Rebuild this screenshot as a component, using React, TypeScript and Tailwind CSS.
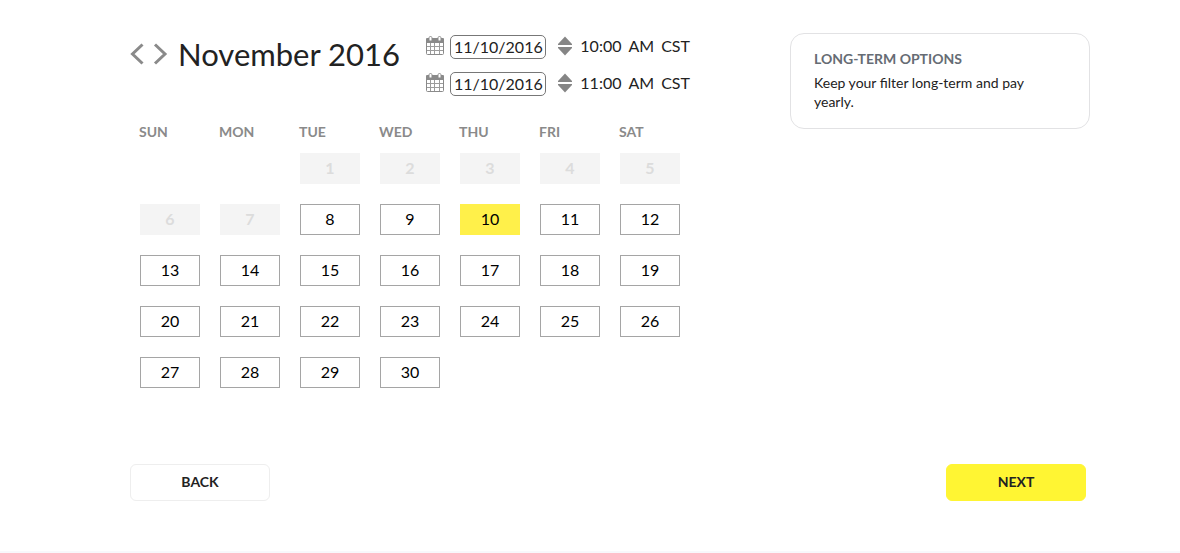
import { useState } from "react";

const WEEKDAYS = ["SUN", "MON", "TUE", "WED", "THU", "FRI", "SAT"];
const FIRST_WEEKDAY = 2;
const DAYS_IN_MONTH = 30;
const FIRST_OPEN_DAY = 8;

const WEEKS: (number | null)[][] = Array.from({ length: 5 }, (_, week) =>
  WEEKDAYS.map((_, weekday) => {
    const day = week * 7 + weekday - FIRST_WEEKDAY + 1;
    return day >= 1 && day <= DAYS_IN_MONTH ? day : null;
  })
);

function CalendarIcon() {
  return (
    <svg className="block" width="18" height="20" viewBox="0 0 18 20" fill="none" aria-hidden="true">
      <path d="M0.5 3V17.5Q0.5 18.5 1.5 18.5H16.5Q17.5 18.5 17.5 17.5V3" stroke="#8a8a8a" />
      <path d="M0 3Q0 2 1 2H17Q18 2 18 3V7H0Z" fill="#8a8a8a" />
      <path d="M4.5 7V18M8.5 7V18M13.5 7V18M1 10.5H17M1 14.5H17" stroke="#9c9c9c" />
      <path d="M3 4V2Q3 0.5 4.5 0.5T6 2V4M12 4V2Q12 0.5 13.5 0.5T15 2V4" stroke="#8a8a8a" />
      <path d="M4.5 1.5V4.5M13.5 1.5V4.5" stroke="#fff" strokeWidth="2" />
    </svg>
  );
}

function Stepper({ label, onStep }: { label: string; onStep: (by: number) => void }) {
  return (
    <span className="flex flex-col gap-0.5">
      <button type="button" aria-label={`${label} later`} onClick={() => onStep(1)}>
        <svg className="block" width="14" height="9" viewBox="0 0 14 9" aria-hidden="true">
          <path d="M7 0.5L14 8V9H0V8Z" fill="#858585" />
        </svg>
      </button>
      <button type="button" aria-label={`${label} earlier`} onClick={() => onStep(-1)}>
        <svg className="block" width="14" height="9" viewBox="0 0 14 9" aria-hidden="true">
          <path d="M0 0H14V1L7 8.5L0 1Z" fill="#858585" />
        </svg>
      </button>
    </span>
  );
}

function DateTimeRow({ id, label, initialHour }: { id: string; label: string; initialHour: number }) {
  const [date, setDate] = useState("11/10/2016");
  const [hour, setHour] = useState(initialHour);
  return (
    <div className="flex h-6 items-center">
      <label htmlFor={id} aria-label={`${label} date`} className="mr-1.5 pb-0.5">
        <CalendarIcon />
      </label>
      <input
        id={id}
        type="text"
        value={date}
        onChange={(e) => setDate(e.target.value)}
        className="h-6 w-24 rounded-[5px] border border-[#777] bg-white pb-0.5 text-center text-base leading-5 text-[#222]"
      />
      <div className="ml-3 flex items-center gap-2 pb-0.5">
        <Stepper label={label} onStep={(by) => setHour((h) => (h + by + 24) % 24)} />
        <span className="flex gap-[7px] whitespace-nowrap text-base leading-6">
          <span>{`${hour % 12 || 12}:00`}</span>
          <span>{hour < 12 ? "AM" : "PM"}</span>
          <span>CST</span>
        </span>
      </div>
    </div>
  );
}

function DayButton({ day, selected, onSelect }: { day: number; selected: boolean; onSelect: () => void }) {
  const disabled = day < FIRST_OPEN_DAY;
  const look = disabled
    ? "border-[#f4f4f4] bg-[#f4f4f4] font-bold text-[#dcdcdc]"
    : selected
      ? "border-[#fff04a] bg-[#fff04a] text-black"
      : "border-[#a5a5a5] bg-white text-black";
  return (
    <button
      type="button"
      disabled={disabled}
      aria-pressed={selected}
      onClick={onSelect}
      className={`flex h-[31px] w-full items-center justify-center border pb-0.5 text-base ${look}`}
    >
      {day}
    </button>
  );
}

export default function App() {
  const [selected, setSelected] = useState(10);
  return (
    <div className="border-b-2 border-[#f8f8fc] bg-white pt-[33px] pr-[90px] pb-[50px] pl-[130px] font-['Lato','Noto_Sans',sans-serif] text-[#222]">
      <main className="flex items-start justify-between">
        <section className="w-[560px]">
          <header className="flex items-start justify-between pt-0.5">
            <div className="flex h-[38px] items-center">
              <button type="button" aria-label="Previous month">
                <svg className="block" width="16" height="24" viewBox="0 0 16 24" fill="none" aria-hidden="true">
                  <path d="M12.5 2.5L2.5 12L12.5 21.5" stroke="#8a8a8a" strokeWidth="3" />
                </svg>
              </button>
              <button type="button" aria-label="Next month" className="ml-1.5">
                <svg className="block" width="16" height="24" viewBox="0 0 16 24" fill="none" aria-hidden="true">
                  <path d="M3 2.5L13 12L3 21.5" stroke="#8a8a8a" strokeWidth="3" />
                </svg>
              </button>
              <h1 className="ml-2.5 whitespace-nowrap text-[31px] leading-10">November 2016</h1>
            </div>
            <div className="flex flex-col gap-[13px]">
              <DateTimeRow id="start-date" label="Start" initialHour={10} />
              <DateTimeRow id="end-date" label="End" initialHour={11} />
            </div>
          </header>

          <table className="mt-4 w-full table-fixed border-collapse">
            <thead>
              <tr>
                {WEEKDAYS.map((name) => (
                  <th key={name} scope="col" className="h-[31px] px-[9px] pt-2 text-left text-sm leading-5 font-bold text-[#8a8a8a]">
                    {name}
                  </th>
                ))}
              </tr>
            </thead>
            <tbody>
              {WEEKS.map((week, index) => (
                <tr key={index}>
                  {week.map((day, weekday) => (
                    <td key={weekday} className="p-2.5">
                      {day !== null && (
                        <DayButton day={day} selected={day === selected} onSelect={() => setSelected(day)} />
                      )}
                    </td>
                  ))}
                </tr>
              ))}
            </tbody>
          </table>
        </section>

        <aside className="w-[300px] rounded-[14px] border border-[#e2e2e4] px-[23px] pt-[15px] pb-[17px]">
          <h2 className="text-sm leading-5 font-bold text-[#666c74]">LONG-TERM OPTIONS</h2>
          <p className="mt-1 text-sm leading-[19px]">Keep your filter long-term and pay yearly.</p>
        </aside>
      </main>

      <footer className="mt-[66px] mr-1 flex justify-between">
        <button type="button" className="h-[37px] w-[140px] rounded-md border border-[#eeeeee] bg-white pb-0.5 text-sm font-bold">
          BACK
        </button>
        <button type="button" className="h-[37px] w-[140px] rounded-md border border-[#fff533] bg-[#fff533] pb-0.5 text-sm font-bold">
          NEXT
        </button>
      </footer>
    </div>
  );
}
